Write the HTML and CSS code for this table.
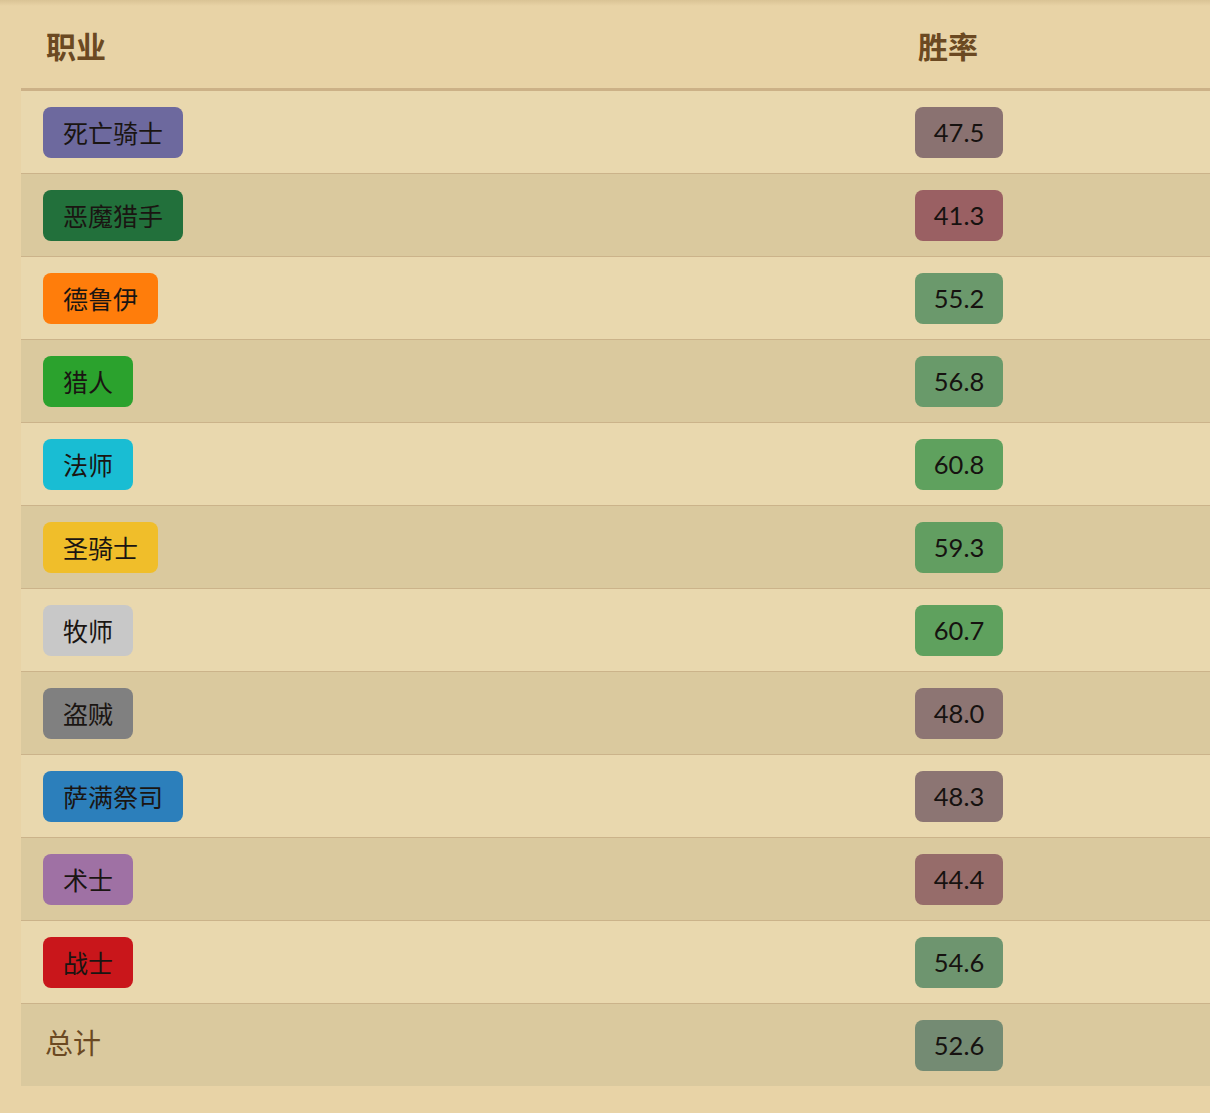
FILE: index.html
```html
<!DOCTYPE html>
<html lang="zh">
<head>
<meta charset="utf-8">
<title>职业胜率</title>
<link rel="stylesheet" href="styles.css">
</head>
<body>
<div class="shadow"></div>
<table class="stats">
  <thead>
    <tr><th class="col-class">职业</th><th class="col-rate">胜率</th></tr>
  </thead>
  <tbody>
    <tr><td><span class="tag dk">死亡骑士</span></td><td><span class="rate r-475">47.5</span></td></tr>
    <tr><td><span class="tag dh">恶魔猎手</span></td><td><span class="rate r-413">41.3</span></td></tr>
    <tr><td><span class="tag druid">德鲁伊</span></td><td><span class="rate r-552">55.2</span></td></tr>
    <tr><td><span class="tag hunter">猎人</span></td><td><span class="rate r-568">56.8</span></td></tr>
    <tr><td><span class="tag mage">法师</span></td><td><span class="rate r-608">60.8</span></td></tr>
    <tr><td><span class="tag paladin">圣骑士</span></td><td><span class="rate r-593">59.3</span></td></tr>
    <tr><td><span class="tag priest">牧师</span></td><td><span class="rate r-607">60.7</span></td></tr>
    <tr><td><span class="tag rogue">盗贼</span></td><td><span class="rate r-480">48.0</span></td></tr>
    <tr><td><span class="tag shaman">萨满祭司</span></td><td><span class="rate r-483">48.3</span></td></tr>
    <tr><td><span class="tag warlock">术士</span></td><td><span class="rate r-444">44.4</span></td></tr>
    <tr><td><span class="tag warrior">战士</span></td><td><span class="rate r-546">54.6</span></td></tr>
    <tr class="total"><td><span class="total-label">总计</span></td><td><span class="rate r-526">52.6</span></td></tr>
  </tbody>
</table>
</body>
</html>
```
FILE: styles.css
```css
html, body {
  margin: 0;
  padding: 0;
  background: #e8d3a6;
}
body {
  padding-left: 21px;
  font-family: "Noto Sans CJK SC", "Noto Sans", sans-serif;
  position: relative;
}
.shadow {
  position: absolute;
  left: 0;
  right: 0;
  top: 0;
  height: 6px;
  background: linear-gradient(#d9c395, rgba(232, 211, 166, 0));
}
.stats {
  width: 100%;
  border-collapse: collapse;
  table-layout: fixed;
}
.stats th {
  height: 86px;
  padding: 2px 0 0 25px;
  text-align: left;
  font-size: 30px;
  font-weight: 700;
  color: #6b4922;
  border-bottom: 3px solid #ccb187;
  background: #e8d3a6;
  vertical-align: middle;
}
.stats th.col-class {
  width: 847px;
}
.stats th.col-rate {
  padding-left: 25px;
}
.stats td {
  height: 82px;
  padding: 0 0 0 22px;
  vertical-align: middle;
  border-bottom: 1px solid #cbb38a;
  background: #e9d8ae;
}
.stats tbody tr:nth-child(even) td {
  background: #dac99e;
}
.stats tbody tr.total td {
  border-bottom: none;
  background: #dac99e;
}
.tag {
  display: inline-block;
  height: 51px;
  line-height: 51px;
  padding: 0 20px;
  border-radius: 8px;
  font-size: 25px;
  color: #1a1512;
  vertical-align: middle;
}
.total-label {
  display: inline-block;
  padding: 0 0 6px 2px;
  font-size: 28px;
  color: #6b4922;
  line-height: 40px;
  vertical-align: middle;
}
.rate {
  display: inline-block;
  height: 51px;
  width: 88px;
  line-height: 51px;
  text-align: center;
  border-radius: 8px;
  font-family: Lato, "Noto Sans", sans-serif;
  font-size: 25.5px;
  color: #161210;
  vertical-align: middle;
}
.dk { background: #6d699e; }
.dh { background: #22703b; }
.druid { background: #ff7d0b; }
.hunter { background: #2ba22d; }
.mage { background: #19bdd3; }
.paladin { background: #f0be2a; }
.priest { background: #c8c8c8; }
.rogue { background: #808080; }
.shaman { background: #2c7fbb; }
.warlock { background: #9f71a4; }
.warrior { background: #c9161b; }

.r-475 { background: #8a7271; }
.r-413 { background: #9a6063; }
.r-552 { background: #6b996c; }
.r-568 { background: #699a6a; }
.r-608 { background: #5fa15e; }
.r-593 { background: #629e61; }
.r-607 { background: #5fa15e; }
.r-480 { background: #8d7573; }
.r-483 { background: #8c7573; }
.r-444 { background: #966c6a; }
.r-546 { background: #6e956f; }
.r-526 { background: #748b73; }
```
